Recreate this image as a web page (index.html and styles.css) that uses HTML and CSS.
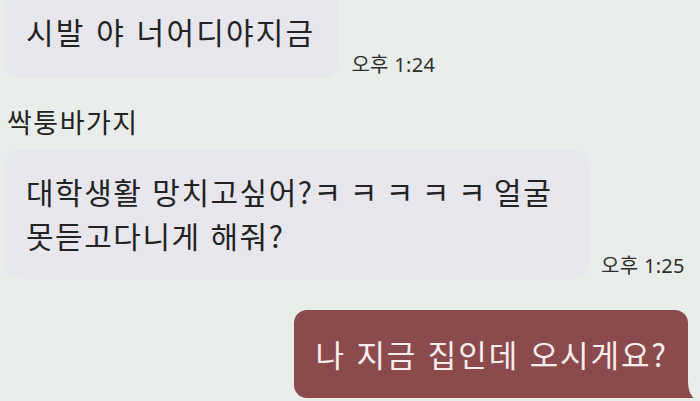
FILE: index.html
```html
<!DOCTYPE html>
<html lang="ko">
<head>
    <meta charset="UTF-8">
    <meta name="viewport" content="width=device-width, initial-scale=1.0">
    <title>채팅</title>
    <link rel="stylesheet" href="styles.css">
</head>
<body>
    <div class="chat">
        <div class="row">
            <div class="bubble bubble-short">시발 야 너어디야지금</div>
            <span class="time">오후 1:24</span>
        </div>

        <div class="name">싹퉁바가지</div>

        <div class="row">
            <div class="bubble bubble-long">대학생활 망치고싶어?<span class="laugh">ㅋㅋㅋㅋㅋ</span>얼굴못듣고다니게 해줘?</div>
            <span class="time">오후 1:25</span>
        </div>

        <div class="row row-mine">
            <div class="bubble bubble-mine">
                나 지금 집인데 오시게요?
                <!-- tail of the outgoing bubble -->
                <svg class="tail" width="14" height="22" viewBox="0 0 14 22">
                    <path d="M0 0 L5 0 C5 9 6 16 14 22 C8 21 4 20 0 18 Z" fill="#8b4b4c"/>
                </svg>
            </div>
        </div>
    </div>
</body>
</html>
```

FILE: styles.css
```css
body {
    margin: 0;
    padding: 0;
    background-color: #e9ede9;
    font-family: "Noto Sans CJK KR", sans-serif;
    color: #232323;
    overflow: hidden;
}
.chat {
    display: flex;
    flex-direction: column;
    padding: 0 12px 0 4px;
    margin-top: -10px;
}
.row {
    display: flex;
    align-items: flex-end;
}
.row-mine {
    justify-content: flex-end;
    margin-top: 31px;
}
.bubble {
    background-color: #e6e6ec; /* light lavender grey */
    border-radius: 16px;
    padding: 19px 24px 22px 22px;
    font-size: 30px;
    line-height: 44px;
    max-width: 585px;
    box-sizing: border-box;
    word-break: break-all;
}
.bubble-short {
    letter-spacing: 2.2px;
    padding-bottom: 25px;
}
.bubble-long {
    letter-spacing: 1.5px;
    padding-right: 14px;
}
.laugh {
    letter-spacing: 8.5px;
}
.time {
    font-family: "Noto Sans", "Noto Sans CJK KR", sans-serif;
    font-size: 20px;
    line-height: 22px;
    letter-spacing: 0.3px;
    color: #2e2e2e;
    margin-left: 12px;
    margin-bottom: 2px;
    white-space: nowrap;
}
.name {
    font-size: 27px;
    line-height: 34px;
    letter-spacing: 1.5px;
    margin: 27px 0 11px 3px;
}
.bubble-mine {
    position: relative;
    background-color: #8b4b4c; /* muted brick red */
    color: #f8eeee;
    font-size: 31px;
    letter-spacing: 1.9px;
    border-radius: 13px 13px 0 13px;
    padding: 22px 20px 22px 21px;
}
.tail {
    position: absolute;
    right: -9px;
    bottom: -3px;
}
```
